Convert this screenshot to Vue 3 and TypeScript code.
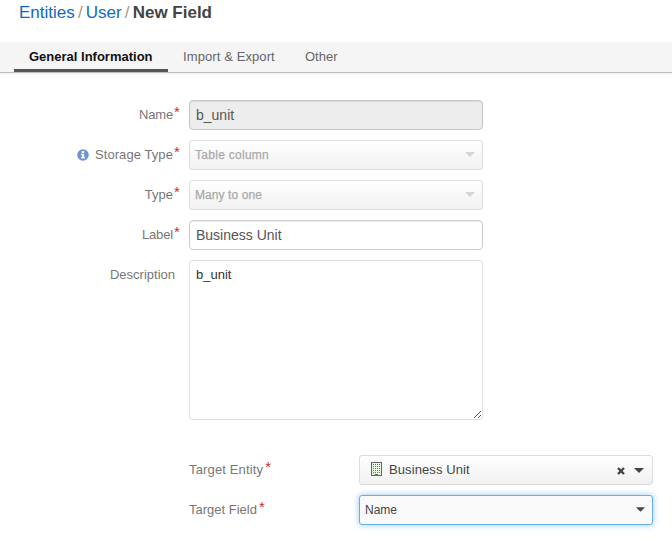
<script setup lang="ts">
import { ref } from 'vue'

interface Tab { id: string; title: string }

const tabs: Tab[] = [
  { id: 'general', title: 'General Information' },
  { id: 'import', title: 'Import & Export' },
  { id: 'other', title: 'Other' },
]
const active = ref('general')
const name = ref('b_unit')
const label = ref('Business Unit')
const description = ref('b_unit')
</script>

<template>
  <main class="page">
    <h1 class="crumbs">
      <a class="link">Entities</a><span class="sep">/</span><a class="link">User</a><span class="sep">/</span><strong class="current">New Field</strong>
    </h1>

    <nav class="tabs">
      <a v-for="t in tabs" :key="t.id" class="tab" :class="[t.id, { active: t.id === active }]" @click="active = t.id">
        <span class="tab-text">{{ t.title }}</span>
      </a>
    </nav>

    <form class="form">
      <div class="row">
        <label class="label"><span class="name">Name</span><em>*</em></label>
        <input v-model="name" class="box input disabled" disabled />
      </div>
      <div class="row">
        <label class="label">
          <svg class="info" viewBox="0 0 12 12"><circle cx="6" cy="6" r="5.8" fill="#6e93d4" /><path d="M4.8 2h2.4v2H4.8zM4 4.7h3.2v3.5H8v1.4H4V8.2h.8V6H4z" fill="#fff" /></svg>
          <span class="storage">Storage Type</span><em>*</em>
        </label>
        <div class="box select muted"><span class="value column">Table column</span><svg class="caret" viewBox="0 0 10 5"><path d="M0 0h10L5 5z" /></svg></div>
      </div>
      <div class="row">
        <label class="label"><span>Type</span><em>*</em></label>
        <div class="box select muted"><span class="value many">Many to one</span><svg class="caret" viewBox="0 0 10 5"><path d="M0 0h10L5 5z" /></svg></div>
      </div>
      <div class="row">
        <label class="label"><span class="short">Label</span><em>*</em></label>
        <input v-model="label" class="box input" />
      </div>
      <div class="row tall">
        <label class="label plain"><span>Description</span></label>
        <div class="area">
          <textarea v-model="description" class="box textarea" spellcheck="false"></textarea>
          <svg class="grip" viewBox="0 0 9 9" shape-rendering="crispEdges"><path d="M1 8L8 1M5 8l3-3" stroke="#555" fill="none" /></svg>
        </div>
      </div>
      <div class="row target first">
        <label class="label"><span class="entity">Target Entity</span><em>*</em></label>
        <div class="box select strong">
          <svg class="building" viewBox="0 0 12 14" shape-rendering="crispEdges">
            <path d="M.5 .5h10v13H.5z" fill="#e9f7e4" stroke="#5d6a5b" />
            <path d="M2 2.5h8M2 4.5h8M2 6.5h8M2 8.5h8M2 10.5h8" stroke="#3f9059" stroke-dasharray="1 1" />
            <path d="M4 12h3v2H4z" fill="#5d6a5b" />
          </svg>
          <span class="value">Business Unit</span>
          <svg class="clear" viewBox="0 0 8 8"><path d="M1 1l6 6M7 1L1 7" stroke="#444" stroke-width="2.4" /></svg>
          <svg class="caret" viewBox="0 0 10 5"><path d="M0 0h10L5 5z" /></svg>
        </div>
      </div>
      <div class="row target">
        <label class="label"><span class="field">Target Field</span><em>*</em></label>
        <div class="box select focused"><span class="value">Name</span><svg class="caret" viewBox="0 0 10 5"><path d="M0 0h10L5 5z" /></svg></div>
      </div>
    </form>
  </main>
</template>

<style>
body { background: #fff; overflow: hidden; }
</style>

<style scoped>
* { box-sizing: border-box; }
.page { width: 672px; height: 539px; overflow: hidden; background: #fff; color: #444; font: 13px/20px "Liberation Sans", Arial, sans-serif; }
.crumbs { display: flex; height: 42px; margin: 0; padding: 2px 0 0 19px; font-size: 17px; line-height: 21px; font-weight: 400; }
.link { color: #1068c9; }
.sep { width: 11px; text-align: center; color: #a39a90; }
.current { color: #444; }
.tabs { display: flex; height: 33px; padding-left: 14px; background: linear-gradient(#f5f5f5 30px, #bbb 30px, #bbb 31px, #f5f5f5 31px); }
.tab { height: 30px; padding: 5px 15px 0; color: #666; line-height: 20px; white-space: nowrap; }
.tab.active { width: 154px; color: #111; font-weight: 700; border-bottom: 3px solid #555; }
.import { width: 122px; letter-spacing: .1px; }
.form { padding-top: 25px; }
.row { display: flex; height: 30px; margin-bottom: 10px; }
.label { display: flex; justify-content: flex-end; width: 180px; height: 30px; margin-right: 9px; padding-top: 5px; color: #777; white-space: nowrap; }
.label em { width: 6px; margin: -3px 0 0 1px; color: #c52f37; font-size: 15px; font-style: normal; }
.name, .short { letter-spacing: -.15px; }
.storage { letter-spacing: .08px; }
.plain { padding-right: 5px; }
.info { width: 12px; height: 12px; margin: 4px 6px 0 0; }
.box { display: block; width: 294px; height: 30px; margin: 0; border: 1px solid #ccc; border-radius: 4px; background: #fff; font-family: inherit; }
.input { padding: 0 6px 1px; color: #555; font-size: 14px; line-height: 20px; outline: 0; box-shadow: inset 0 1px 1px rgba(0, 0, 0, .08); }
.disabled { background: #ededed; border-color: #c6c6c6; }
.select { display: flex; align-items: center; padding: 0 7px 0 5px; background: linear-gradient(#fff, #f1f1f1); border-color: #ddd; border-radius: 3px; font-size: 12px; }
.select .value { flex: 1; }
.muted { color: #aaa; -webkit-text-stroke: .25px #aaa; }
.column { letter-spacing: .28px; }
.many { letter-spacing: .08px; }
.caret { width: 10px; height: 5px; fill: #444; }
.muted .caret { fill: #d5d5d5; margin-bottom: 2px; }
.tall { height: 160px; }
.area { position: relative; }
.textarea { height: 160px; padding: 4px 6px; resize: none; outline: 0; border-color: #ddd; color: #333; font-size: 13px; line-height: 20px; }
.grip { position: absolute; right: 1px; bottom: 1px; width: 9px; height: 9px; }
.target { padding-left: 189px; }
.target .label { justify-content: flex-start; width: 161px; }
.entity { letter-spacing: .15px; }
.target .label em { margin-left: 2px; }
.first { margin-top: 35px; }
.strong { padding: 0 8px 0 11px; font-size: 13px; color: #444; }
.building { width: 12px; height: 14px; margin: 0 6px 2px 0; }
.strong .value { padding-bottom: 1px; letter-spacing: .1px; }
.clear { width: 8px; height: 8px; margin: 1px 9px 0 0; }
.focused { background: #f9f9f9; border-color: #65b0ec; box-shadow: 0 0 6px rgba(82, 168, 236, .6); color: #444; }
.focused .caret { width: 9px; margin-bottom: 2px; }
</style>
